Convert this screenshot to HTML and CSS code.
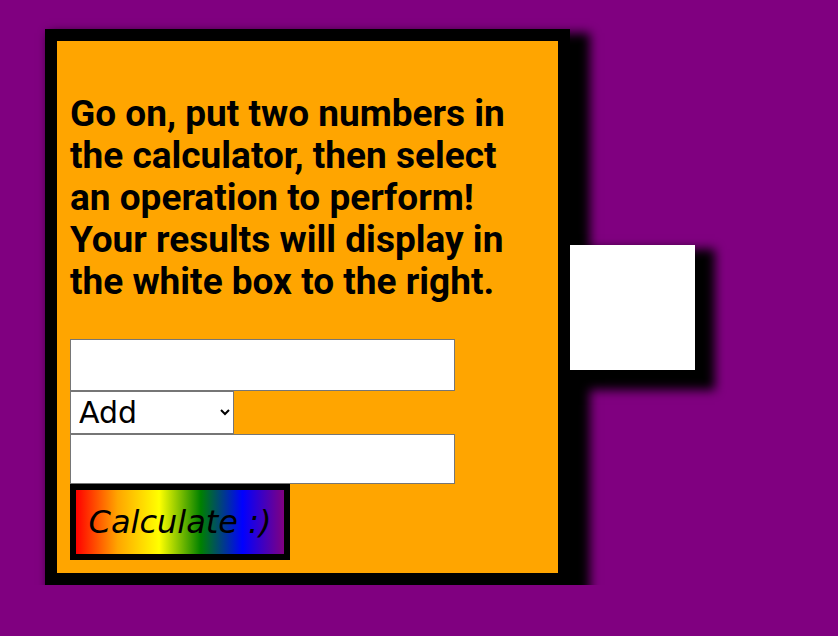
FILE: index.html
```html
<!DOCTYPE html>
<html lang="en">
<head>
<meta charset="utf-8">
<title>Calculator</title>
<link rel="stylesheet" href="styles.css">
</head>
<body>
  <div class="page">
    <div class="calc">
      <h1 class="intro">Go on, put two numbers in the calculator, then select an operation to perform! Your results will display in the white box to the right.</h1>
      <form class="form">
        <input class="num num-first" type="text">
        <select class="op">
          <option>Add</option>
          <option>Subtract</option>
          <option>Multiply</option>
          <option>Divide</option>
        </select>
        <input class="num" type="text">
        <button class="go" type="button">Calculate :)</button>
      </form>
    </div>
    <div class="result"></div>
  </div>
</body>
</html>
```
FILE: styles.css
```css
html, body {
  margin: 0;
  padding: 0;
}
body {
  background: #800080;
  font-family: "DejaVu Sans", Verdana, sans-serif;
}
.page {
  display: flex;
  align-items: center;
  padding: 29px 0 0 45px;
}
.calc {
  width: 475px;
  padding: 13px;
  background: #ffa500;
  border: 12px solid #000;
  box-shadow: 12px 12px 10px 8px #000;
}
.intro {
  margin: 39px 0 36px;
  font-family: Roboto, "Liberation Sans", sans-serif;
  font-size: 37px;
  line-height: 42px;
  font-weight: 700;
  color: #000;
}
.form {
  display: flex;
  flex-direction: column;
  align-items: flex-start;
}
.num {
  box-sizing: border-box;
  width: 385px;
  height: 50px;
  margin: 0;
  border: 1px solid #767676;
  background: #fff;
  font-size: 30px;
  font-family: "DejaVu Sans", sans-serif;
}
.num-first {
  height: 52px;
}
.op {
  box-sizing: border-box;
  width: 164px;
  height: 43px;
  margin: 0;
  padding: 0 4px;
  border: 1px solid #767676;
  border-radius: 0;
  background: #fff;
  font-size: 30px;
  font-family: "DejaVu Sans", sans-serif;
  color: #000;
}
.go {
  box-sizing: border-box;
  width: 220px;
  height: 76px;
  margin: 0;
  padding: 0;
  border: 6px solid #000;
  background: linear-gradient(to right, red, orange, yellow, green, blue, purple);
  font-family: "DejaVu Sans", sans-serif;
  font-style: italic;
  font-size: 32px;
  color: #000;
}
.result {
  width: 125px;
  height: 125px;
  background: #fff;
  box-shadow: 12px 12px 10px 8px #000;
}
```
